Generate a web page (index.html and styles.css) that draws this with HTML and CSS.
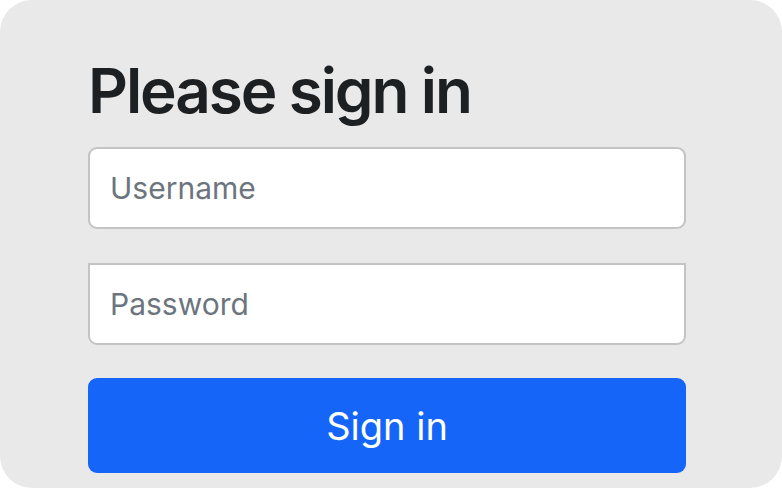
FILE: index.html
```html
<!DOCTYPE html>
<html lang="en">
<head>
<meta charset="utf-8">
<title>Please sign in</title>
<link rel="stylesheet" href="styles.css">
</head>
<body>
<div class="page">
  <form class="login-form">
    <h2 class="heading">Please sign in</h2>
    <input class="form-control username" type="text" placeholder="Username">
    <input class="form-control password" type="password" placeholder="Password">
    <button class="primary" type="submit">Sign in</button>
  </form>
</div>
</body>
</html>
```
FILE: styles.css
```css
html, body {
  margin: 0;
  padding: 0;
  background: #ffffff;
}
body {
  font-family: Inter, "Noto Sans", "Liberation Sans", sans-serif;
}
.page {
  height: 488px;
  box-sizing: border-box;
  background: #e9e9e9;
  border-radius: 32px;
  padding: 60px 96px 0 88px;
}
.login-form {
  display: flex;
  flex-direction: column;
  width: 598px;
}
.heading {
  margin: 0 0 25px 0;
  font-size: 62px;
  line-height: 62px;
  font-weight: 600;
  color: #1d2023;
  letter-spacing: -2.1px;
}
.form-control {
  display: block;
  box-sizing: border-box;
  width: 100%;
  height: 82px;
  margin: 0;
  padding: 0 20px;
  font-family: inherit;
  font-size: 30px;
  color: #495057;
  background: #ffffff;
  border: 2px solid #c3c3c3;
  border-radius: 9px;
  outline: none;
}
.form-control::placeholder {
  color: #6c757d;
  opacity: 1;
}
.password {
  margin-top: 34px;
  border-top-left-radius: 0;
  border-top-right-radius: 0;
}
.primary {
  margin-top: 33px;
  height: 95px;
  width: 100%;
  border: none;
  border-radius: 9px;
  background: #1566f8;
  color: #ffffff;
  font-family: inherit;
  font-size: 38px;
  font-weight: 400;
  padding: 0;
}
```
